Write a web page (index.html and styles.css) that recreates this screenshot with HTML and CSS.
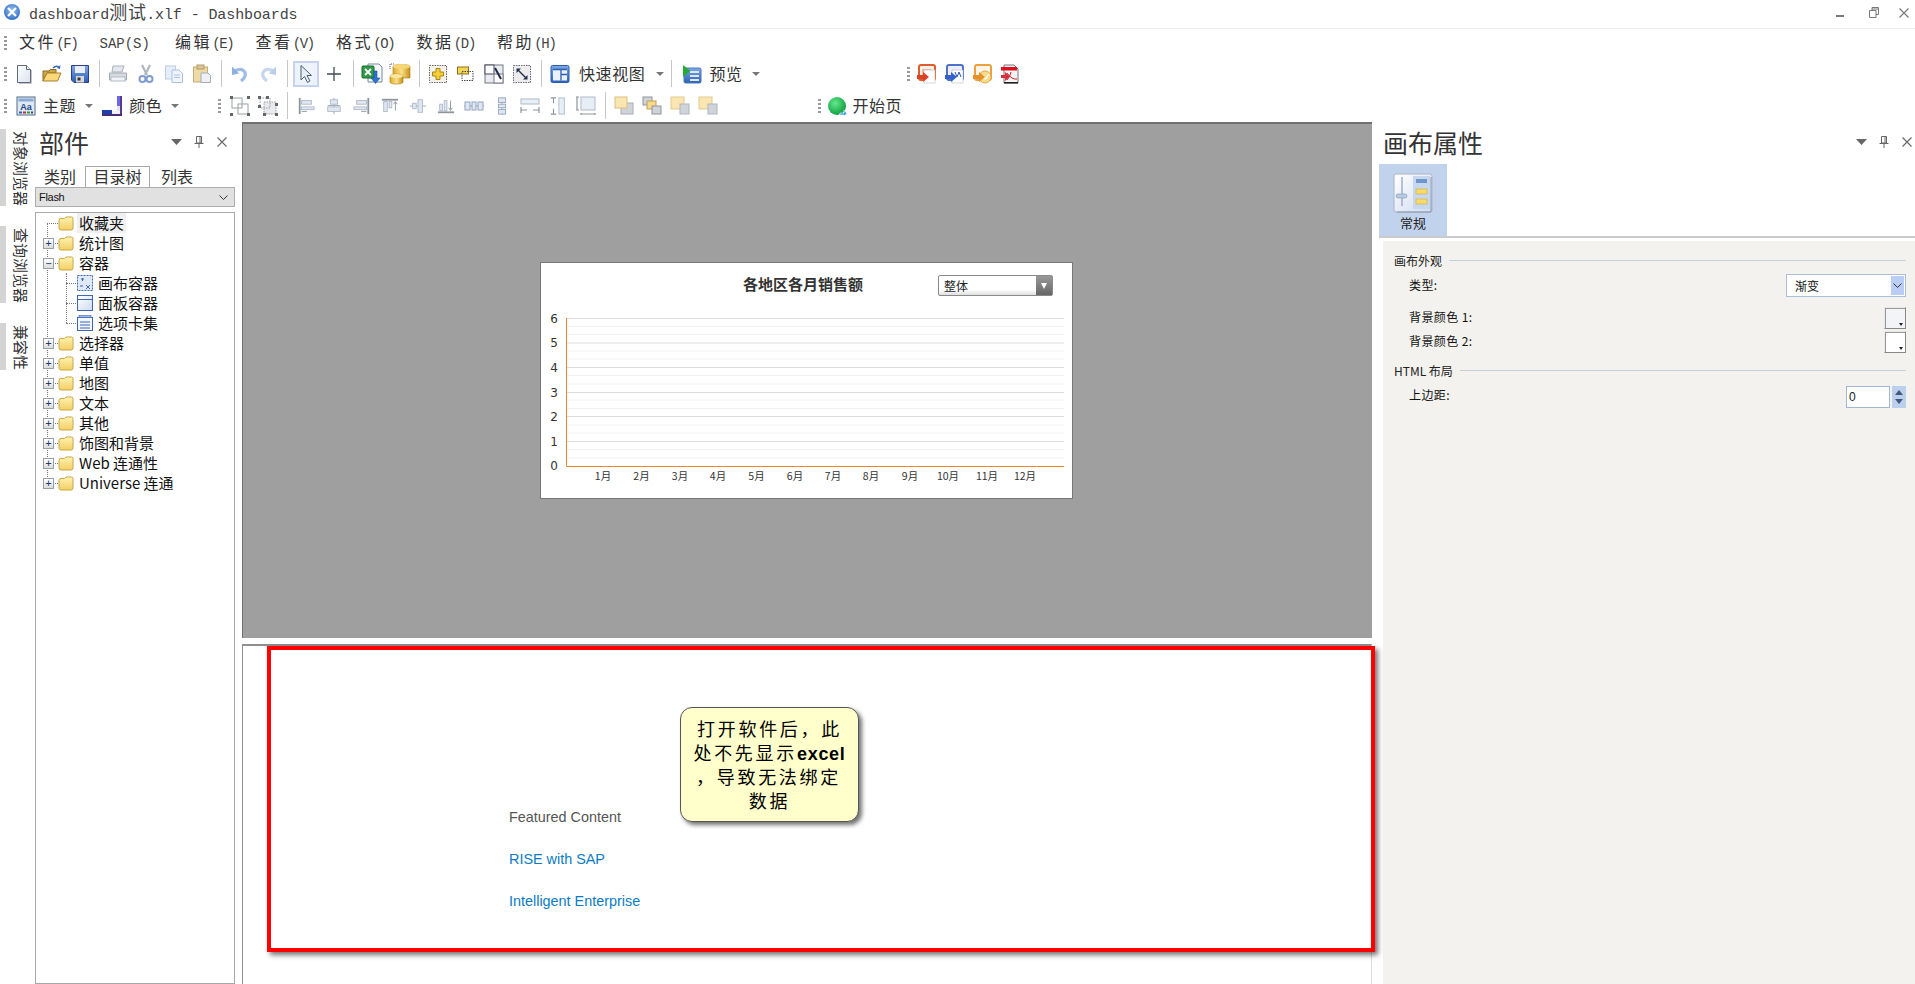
FILE: index.html
```html
<!DOCTYPE html>
<html lang="zh-CN">
<head>
<meta charset="utf-8">
<title>dashboard测试.xlf - Dashboards</title>
<link rel="stylesheet" href="styles.css">
</head>
<body>
<svg class="sprite" aria-hidden="true">
  <defs>
    <linearGradient id="gFold" x1="0" y1="0" x2="0" y2="1"><stop offset="0" stop-color="#fff3b4"/><stop offset="1" stop-color="#f3cf62"/></linearGradient>
    <linearGradient id="gDoc" x1="0" y1="0" x2="1" y2="1"><stop offset="0" stop-color="#fff"/><stop offset="1" stop-color="#d9e2ee"/></linearGradient>
    <linearGradient id="gBlue" x1="0" y1="0" x2="0" y2="1"><stop offset="0" stop-color="#7da8e6"/><stop offset="1" stop-color="#2c5fb5"/></linearGradient>
    <linearGradient id="gGold" x1="0" y1="0" x2="1" y2="0"><stop offset="0" stop-color="#e0a92a"/><stop offset=".5" stop-color="#fbe08a"/><stop offset="1" stop-color="#c98f16"/></linearGradient>
    <linearGradient id="gPanel" x1="0" y1="0" x2="1" y2="1"><stop offset="0" stop-color="#ffffff"/><stop offset="1" stop-color="#cfdcf2"/></linearGradient>
    <radialGradient id="gGreen" cx=".4" cy=".35" r=".7"><stop offset="0" stop-color="#63e88c"/><stop offset="1" stop-color="#0a9a3a"/></radialGradient>
    <radialGradient id="gApp" cx=".5" cy=".4" r=".6"><stop offset="0" stop-color="#9dc3ee"/><stop offset="1" stop-color="#2f6fc8"/></radialGradient>

    <symbol id="i-folder" viewBox="0 0 16 15"><path d="M1 4.5Q1 2.5 3 2.5H6.5L8 1H13.5Q15 1 15 2.5V12Q15 14 13 14H3Q1 14 1 12Z" fill="url(#gFold)" stroke="#c8a648"/></symbol>
    <symbol id="i-new" viewBox="0 0 20 20"><path d="M3.5 1.5H12.5L16.5 5.5V18.5H3.5Z" fill="url(#gDoc)" stroke="#5c6b80"/><path d="M12.5 1.5V5.5H16.5" fill="#eef" stroke="#5c6b80"/><path d="M17.5 6V19.5H5" fill="none" stroke="#c4c4c4"/></symbol>
    <symbol id="i-open" viewBox="0 0 20 20"><path d="M1 7H7L8.500 5.500H14V9H5L1 17Z" fill="#d2a548" stroke="#8a6a24"/><path d="M1 17L5 9H19L15.500 17Z" fill="#fbd87a" stroke="#a6812c"/><path d="M11 4Q14 1 17 3" fill="none" stroke="#3a6cc0" stroke-width="1.500"/><path d="M18.500 1L18 5L14.800 4Z" fill="#3a6cc0"/></symbol>
    <symbol id="i-save" viewBox="0 0 20 20"><path d="M1.500 1.500H18.500V18.500H4L1.500 16Z" fill="url(#gBlue)" stroke="#2c3f8c"/><rect x="5" y="2" width="10" height="7" fill="#e8eefa"/><rect x="6" y="12" width="8" height="6.500" fill="#d8d8d8"/><rect x="7.500" y="13.500" width="3" height="3" fill="#333"/></symbol>
    <symbol id="i-print" viewBox="0 0 20 20"><path d="M5 2H16L14 8H4Z" fill="#e4e8ee" stroke="#aab2bc"/><path d="M1.500 9H18.500V16H1.500Z" fill="#d5dae1" stroke="#a3abb5"/><rect x="3" y="13" width="14" height="4" fill="#f3f4f6" stroke="#b5bcc5"/></symbol>
    <symbol id="i-cut" viewBox="0 0 20 20"><path d="M6 1L11 11M14 1L9 11" stroke="#b0b7bf" stroke-width="2.200" fill="none"/><circle cx="6.500" cy="15" r="3" fill="none" stroke="#7f9bd0" stroke-width="2"/><circle cx="13.500" cy="15" r="3" fill="none" stroke="#7f9bd0" stroke-width="2"/></symbol>
    <symbol id="i-copy" viewBox="0 0 20 20"><rect x="1.500" y="2" width="10" height="13" fill="#e6eef9" stroke="#bccde6"/><path d="M8 6H15L18.500 9.500V18.500H8Z" fill="#f1f5fb" stroke="#a9c0e2"/><path d="M10 11H16M10 13.500H16" stroke="#a9c0e2"/></symbol>
    <symbol id="i-paste" viewBox="0 0 20 20"><rect x="1.500" y="3" width="14" height="15" fill="#efd9a7" stroke="#c6ad77"/><rect x="5" y="1" width="7" height="4" fill="#d9c79b" stroke="#b49c67"/><path d="M9 9H16L18.500 11.500V18.500H9Z" fill="#eef0f3" stroke="#a6adb6"/></symbol>
    <symbol id="i-undo" viewBox="0 0 20 20"><path d="M5 7Q12 3 15 8.500Q16.500 13 11 17" fill="none" stroke="#9dbde8" stroke-width="3.200"/><path d="M2 2.500L9 9.500L2 11Z" fill="#8db0e2"/></symbol>
    <symbol id="i-redo" viewBox="0 0 20 20"><path d="M15 7Q8 3 5 8.500Q3.500 13 9 17" fill="none" stroke="#c6d6ee" stroke-width="3.200"/><path d="M18 2.500L11 9.500L18 11Z" fill="#b8cdea"/></symbol>
    <symbol id="i-arrow" viewBox="0 0 20 20"><path d="M5 1.500V16L8.500 12.500L11.500 18.500L14 17L11 11.500H15.500Z" fill="#e8eef8" stroke="#4e5f73"/></symbol>
    <symbol id="i-plus" viewBox="0 0 20 20"><path d="M10 3V17M3 10H17" stroke="#3f4a5a" stroke-width="1.300" fill="none"/></symbol>
    <symbol id="i-excel" viewBox="0 0 22 22"><path d="M7 1H18L21 4V19H7Z" fill="#f4f7fb" stroke="#7a8aa0"/><rect x="1" y="3" width="12" height="12" rx="1" fill="#2f9a46" stroke="#1c6b30"/><path d="M4 6L10 12M10 6L4 12" stroke="#fff" stroke-width="1.800"/><path d="M16 8V15H19L14.500 20.500L10 15H13V8Z" fill="#2f73d0" stroke="#1c4f9c" stroke-width=".6"/></symbol>
    <symbol id="i-db" viewBox="0 0 22 22"><path d="M1 6V1H6" fill="none" stroke="#555" stroke-dasharray="1 1"/><path d="M4 3.500C4 .800 21 .800 21 3.500V15H4Z" fill="url(#gGold)" stroke="#a87d12" stroke-width=".6"/><ellipse cx="12.500" cy="3.500" rx="8.500" ry="2.500" fill="#f5d777"/><path d="M1 13C1 10.500 14 10.500 14 13V19C14 21.800 1 21.800 1 19Z" fill="url(#gGold)" stroke="#a87d12" stroke-width=".6"/><ellipse cx="7.500" cy="13" rx="6.500" ry="2" fill="#fbe6a0"/></symbol>
    <symbol id="i-addc" viewBox="0 0 20 20"><rect x="1.500" y="1.500" width="17" height="17" fill="#f4f2e8" stroke="#667" stroke-dasharray="1.500 1"/><path d="M8 4.500H12V8H15.500V12H12V15.500H8V12H4.500V8H8Z" fill="#f5cf3a" stroke="#a88815"/></symbol>
    <symbol id="i-smallc" viewBox="0 0 20 20"><rect x="1.500" y="3" width="11" height="7" fill="#f6d452" stroke="#8a7318"/><rect x="6" y="7.500" width="11" height="9" fill="none" stroke="#445" stroke-dasharray="1.500 1"/></symbol>
    <symbol id="i-fit" viewBox="0 0 20 20"><rect x="1" y="1" width="18" height="18" fill="#e8ebf0" stroke="#778"/><rect x="1" y="1" width="9" height="9" fill="#fff" stroke="#445"/><rect x="10" y="10" width="9" height="9" fill="#fff" stroke="#778"/><path d="M11 4L17 15" stroke="#1d2b44" stroke-width="2"/></symbol>
    <symbol id="i-resize" viewBox="0 0 20 20"><rect x="1.500" y="1.500" width="17" height="17" fill="#ececec" stroke="#667" stroke-dasharray="1.500 1"/><path d="M6 6L14 14" stroke="#22304a" stroke-width="1.500"/><path d="M4.500 4.500H9L4.500 9ZM15.500 15.500H11L15.500 11Z" fill="#22304a"/></symbol>
    <symbol id="i-quick" viewBox="0 0 20 20"><rect x="1" y="1.500" width="18" height="17" rx="1.500" fill="url(#gBlue)" stroke="#2a5fb0"/><rect x="3" y="5.500" width="14" height="11" fill="#eaf1fb"/><path d="M11 5.500V16.500M11 10.500H17M3 5.500H17" stroke="#2a5fb0" stroke-width="1.300"/></symbol>
    <symbol id="i-preview" viewBox="0 0 20 20"><rect x="2" y="4" width="17" height="15" rx="1.500" fill="url(#gBlue)" stroke="#4c78b8"/><rect x="8" y="7" width="9" height="2" fill="#dce8f8"/><rect x="8" y="11" width="9" height="2" fill="#dce8f8"/><rect x="8" y="15" width="9" height="2" fill="#dce8f8"/><path d="M1 1L8.500 7L1 13Z" fill="#28a83c"/></symbol>
    <symbol id="i-ppt" viewBox="0 0 20 20"><rect x="3" y="1" width="16" height="15" rx="2" fill="#f3f1ec" stroke="#e25c2a" stroke-width="2"/><rect x="6" y="5" width="9" height="7" fill="#f7b79c"/><rect x="8" y="6" width="11" height="13" fill="#fff" stroke="#bbb" stroke-width=".6"/><path d="M1 11H7V8L13 13L7 18V15H1Z" fill="#d8432a"/></symbol>
    <symbol id="i-word" viewBox="0 0 20 20"><rect x="3" y="1" width="16" height="15" rx="2" fill="#eef" stroke="#4d73c8" stroke-width="2"/><rect x="8" y="6" width="11" height="13" fill="#fff" stroke="#bbb" stroke-width=".6"/><path d="M11 8L13 13L15 8L17 13" fill="none" stroke="#2c53a8"/><path d="M1 11H7V8L13 13L7 18V15H1Z" fill="#3561c8"/></symbol>
    <symbol id="i-outl" viewBox="0 0 20 20"><rect x="3" y="1" width="16" height="15" rx="2" fill="#fdf5e8" stroke="#eca042" stroke-width="2"/><circle cx="13" cy="13" r="6" fill="#f8dc8c" stroke="#e2a94a"/><path d="M11 13L13.500 15L17 10" fill="none" stroke="#fff" stroke-width="1.300"/><path d="M1 11H7V8L13 13L7 18V15H1Z" fill="#e59028"/></symbol>
    <symbol id="i-pdf" viewBox="0 0 20 20"><path d="M4 1H14L18 5V19H4Z" fill="#f4f4f4" stroke="#777"/><rect x="1" y="3" width="16" height="3.500" fill="#e01020"/><path d="M7 9Q12 16 17 15M7 16Q10 13 11 8" fill="none" stroke="#c8202c"/><path d="M1 11H5V8L10 12.500L5 17V14H1Z" fill="#d8303a"/><rect x="4" y="18" width="14" height="1.500" fill="#222"/></symbol>
    <symbol id="i-theme" viewBox="0 0 20 20"><rect x="1" y="1" width="18" height="18" fill="#dfe8f5" stroke="#536a8a"/><rect x="2.500" y="2.500" width="15" height="3" fill="#8daad4"/><text x="10" y="13.500" class="aa">Aa</text><rect x="3" y="15.500" width="3" height="2" fill="#2a62b8"/><rect x="7" y="15.500" width="3" height="2" fill="#c03030"/><rect x="11" y="15.500" width="3" height="2" fill="#2f9a46"/><rect x="15" y="15.500" width="2" height="2" fill="#444"/></symbol>
    <symbol id="i-color" viewBox="0 0 20 20"><rect x="15" y="0" width="5" height="10" fill="#6a6ae8"/><rect x="15" y="10" width="5" height="6" fill="#e2e2f2"/><rect x="18" y="0" width="2" height="20" fill="#5b3a8e"/><rect x="0" y="14" width="10" height="5" fill="#1c3fa8"/><rect x="0" y="18" width="20" height="2" fill="#4a2a7a"/><rect x="10" y="15" width="8" height="3" fill="#f2f2f2"/></symbol>
    <symbol id="i-group" viewBox="0 0 20 20"><g fill="none" stroke="#9aa0a6"><rect x="2" y="2" width="10" height="10"/><rect x="8" y="8" width="10" height="10"/></g><g fill="#666"><rect x="0" y="0" width="3" height="3"/><rect x="17" y="0" width="3" height="3"/><rect x="0" y="17" width="3" height="3"/><rect x="17" y="17" width="3" height="3"/></g></symbol>
    <symbol id="i-ungroup" viewBox="0 0 20 20"><rect x="6" y="6" width="12" height="12" fill="#e8eaee" stroke="#9aa0a6" stroke-dasharray="1.500 1"/><path d="M2 2H12V12H2Z" fill="none" stroke="#9aa0a6" stroke-dasharray="1.500 1"/><g fill="#666"><rect x="0" y="0" width="3" height="3"/><rect x="8" y="0" width="3" height="3"/><rect x="17" y="7" width="3" height="3"/><rect x="0" y="9" width="3" height="3"/><rect x="17" y="17" width="3" height="3"/><rect x="5" y="17" width="3" height="3"/></g></symbol>

    <symbol id="a-left" viewBox="0 0 20 20"><path d="M3 1V19" stroke="#8d949c" stroke-width="2"/><rect x="5" y="4" width="11" height="4" fill="#dfe7f2" stroke="#aeb9c7"/><rect x="5" y="11" width="14" height="3" fill="#dfe7f2" stroke="#aeb9c7"/><path d="M5 16H11" stroke="#8d949c"/></symbol>
    <symbol id="a-center" viewBox="0 0 20 20"><path d="M10 1V4M10 8V11M10 15V19M3 9.500H17" stroke="#9aa3ad"/><rect x="6" y="3" width="8" height="5" fill="#dfe7f2" stroke="#aeb9c7"/><rect x="3" y="11" width="14" height="5" fill="#dfe7f2" stroke="#aeb9c7"/></symbol>
    <symbol id="a-right" viewBox="0 0 20 20"><path d="M17 1V19" stroke="#8d949c" stroke-width="2"/><rect x="4" y="4" width="11" height="4" fill="#dfe7f2" stroke="#aeb9c7"/><rect x="1" y="11" width="14" height="3" fill="#dfe7f2" stroke="#aeb9c7"/><path d="M9 16H15" stroke="#8d949c"/></symbol>
    <symbol id="a-top" viewBox="0 0 20 20"><path d="M1 3H19" stroke="#8d949c" stroke-width="2"/><rect x="3" y="5" width="4" height="11" fill="#dfe7f2" stroke="#aeb9c7"/><rect x="9" y="5" width="3" height="7" fill="#dfe7f2" stroke="#aeb9c7"/><path d="M16 15V6M14 8L16 5L18 8" fill="none" stroke="#8d949c"/></symbol>
    <symbol id="a-mid" viewBox="0 0 20 20"><path d="M1 10H19" stroke="#9aa3ad"/><rect x="4" y="7" width="4" height="6" fill="#dfe7f2" stroke="#aeb9c7"/><rect x="10" y="3" width="5" height="14" fill="#dfe7f2" stroke="#aeb9c7"/></symbol>
    <symbol id="a-bottom" viewBox="0 0 20 20"><path d="M1 17H19" stroke="#8d949c" stroke-width="2"/><rect x="3" y="8" width="3" height="7" fill="#dfe7f2" stroke="#aeb9c7"/><rect x="8" y="4" width="3" height="11" fill="#dfe7f2" stroke="#aeb9c7"/><path d="M15 4V14M13 12L15 15L17 12" fill="none" stroke="#8d949c"/></symbol>
    <symbol id="a-hdist" viewBox="0 0 20 20"><path d="M0 10H20" stroke="#9aa3ad"/><rect x="1" y="6" width="5" height="8" fill="#dfe7f2" stroke="#93a5bd"/><rect x="8" y="6" width="4" height="8" fill="#dfe7f2" stroke="#93a5bd"/><rect x="14" y="6" width="5" height="8" fill="#dfe7f2" stroke="#93a5bd"/></symbol>
    <symbol id="a-vdist" viewBox="0 0 20 20"><path d="M10 0V20" stroke="#9aa3ad"/><rect x="6" y="1" width="8" height="5" fill="#dfe7f2" stroke="#93a5bd"/><rect x="6" y="8" width="8" height="4" fill="#dfe7f2" stroke="#93a5bd"/><rect x="6" y="14" width="8" height="5" fill="#dfe7f2" stroke="#93a5bd"/></symbol>
    <symbol id="a-hsize" viewBox="0 0 20 20"><rect x="1" y="3" width="18" height="5" fill="#e8eef6" stroke="#aeb9c7"/><path d="M1 11V17M19 11V17M1 14H7M13 14H19" stroke="#8d949c" stroke-width="1.200"/></symbol>
    <symbol id="a-vsize" viewBox="0 0 20 20"><rect x="11" y="1" width="6" height="18" fill="#e8eef6" stroke="#aeb9c7"/><path d="M2 1H8M2 19H8M5 1V7M5 13V19" stroke="#8d949c" stroke-width="1.200"/></symbol>
    <symbol id="a-bsize" viewBox="0 0 20 20"><rect x="5" y="1" width="14" height="13" fill="#e8eef6" stroke="#aeb9c7"/><path d="M1 1V14M0 1H3M0 14H3M5 17V19M19 17V19M5 18H19" stroke="#8d949c" stroke-width="1.200"/></symbol>

    <symbol id="o-a" viewBox="0 0 20 20"><rect x="7" y="7" width="12" height="11" fill="#d0d4da" stroke="#a8adb4"/><rect x="1" y="1" width="12" height="11" fill="#fbe6b2" stroke="#d9bf80"/></symbol>
    <symbol id="o-b" viewBox="0 0 20 20"><rect x="1" y="1" width="9" height="8" fill="#d0d4da" stroke="#8e949c"/><rect x="5" y="5" width="9" height="8" fill="#f8d98e" stroke="#c0a050"/><rect x="10" y="10" width="9" height="8" fill="#d0d4da" stroke="#8e949c"/></symbol>
    <symbol id="o-c" viewBox="0 0 20 20"><rect x="1" y="1" width="13" height="12" fill="#fbe6b2" stroke="#e0cb92"/><rect x="10" y="8" width="9" height="10" fill="#d0d4da" stroke="#b0b5bc"/></symbol>
    <symbol id="i-start" viewBox="0 0 20 20"><circle cx="10" cy="10" r="9" fill="url(#gGreen)"/><path d="M13 17H17V14L20 17.500L17 20V19H12Z" fill="#3aa3e8" stroke="#fff" stroke-width=".6"/></symbol>
    <symbol id="i-general" viewBox="0 0 40 40"><rect x="1" y="1" width="38" height="38" rx="2" fill="url(#gPanel)" stroke="#aab4c4"/><rect x="20" y="3" width="17" height="33" fill="#c7d8ee"/><path d="M9 4V33" stroke="#7f8c9e"/><rect x="3" y="21" width="11" height="4" rx="2" fill="#b8cbe4" stroke="#7f93ad" stroke-width=".6"/><rect x="23" y="6" width="11" height="4" fill="#6f96cc"/><rect x="23" y="16" width="11" height="5" fill="#f7dc6c" stroke="#d0a93a" stroke-width=".6"/><rect x="23" y="26" width="11" height="5" fill="#f7dc6c" stroke="#d0a93a" stroke-width=".6"/><path d="M38 4V39H4" fill="none" stroke="#8d97a6"/></symbol>
    <symbol id="i-canvas-c" viewBox="0 0 16 16"><rect x=".5" y=".5" width="15" height="15" fill="#dfe9f8" stroke="#3c67b4" stroke-dasharray="2 1"/><path d="M4 4H7M5.500 3V6M9 10L13 14M13 10L9 14M3 11H6" stroke="#3c67b4"/></symbol>
    <symbol id="i-panel-c" viewBox="0 0 16 16"><rect x=".5" y=".5" width="15" height="15" fill="url(#gPanel)" stroke="#3c67b4"/><path d="M1 4.500H15" stroke="#3c67b4"/></symbol>
    <symbol id="i-tab-c" viewBox="0 0 16 16"><rect x=".5" y="2.500" width="15" height="13" fill="#f2f6fc" stroke="#3c67b4"/><rect x="2" y=".5" width="12" height="2" fill="#9db9e4" stroke="#3c67b4" stroke-width=".6"/><path d="M3 7H13M3 10H13M3 13H13" stroke="#3c67b4"/></symbol>
    <symbol id="i-tri" viewBox="0 0 11 6"><path d="M0 0H11L5.500 6Z" fill="#666"/></symbol>
    <symbol id="i-pin" viewBox="0 0 10 12"><path d="M2.500 .5H7.500V7H2.500ZM.5 7.500H9.500M5 8V12M6 1V7" fill="none" stroke="#666"/></symbol>
    <symbol id="i-x" viewBox="0 0 10 10"><path d="M.5 .5L9.500 9.500M9.500 .5L.5 9.500" stroke="#666" stroke-width="1.100"/></symbol>
    <symbol id="i-chev" viewBox="0 0 9 5"><path d="M.5 .5L4.500 4.500L8.500 .5" fill="none" stroke="#333"/></symbol>
  </defs>
</svg>

<div class="app">
  <header class="titlebar">
    <svg class="appicon" viewBox="0 0 16 16"><circle cx="8" cy="8" r="8" fill="url(#gApp)"/><path d="M4 4L12 12M12 4L4 12" stroke="#fff" stroke-width="2.200"/></svg>
    <span class="titletext">dashboard<span class="tcjk">测试</span>.xlf - Dashboards</span>
    <div class="winctl">
      <svg class="w-min" viewBox="0 0 8 2"><rect width="8" height="2" fill="#777"/></svg>
      <svg class="w-res" viewBox="0 0 10 11"><path d="M.5 3.500H7V10.500H.5ZM3 3.500V.5H9.500V7.500H7M3 2H9.500" fill="none" stroke="#777"/></svg>
      <svg class="w-x" viewBox="0 0 10 10"><path d="M.5 .5L9.500 9.500M9.500 .5L.5 9.500" stroke="#777" stroke-width="1.100"/></svg>
    </div>
  </header>

  <nav class="menubar">
    <span class="grip gmenu"></span>
    <span class="mi">文件<i>(F)</i></span>
    <span class="mi mi-wide"><i>SAP(S)</i></span>
    <span class="mi">编辑<i>(E)</i></span>
    <span class="mi">查看<i>(V)</i></span>
    <span class="mi">格式<i>(O)</i></span>
    <span class="mi">数据<i>(D)</i></span>
    <span class="mi">帮助<i>(H)</i></span>
  </nav>

  <div class="toolbar tb1">
    <span class="grip"></span>
    <span class="s"><svg class="ic"><use href="#i-new"/></svg></span>
    <span class="s"><svg class="ic"><use href="#i-open"/></svg></span>
    <span class="s"><svg class="ic"><use href="#i-save"/></svg></span>
    <span class="sep"></span>
    <span class="s"><svg class="ic"><use href="#i-print"/></svg></span>
    <span class="s"><svg class="ic"><use href="#i-cut"/></svg></span>
    <span class="s"><svg class="ic"><use href="#i-copy"/></svg></span>
    <span class="s"><svg class="ic"><use href="#i-paste"/></svg></span>
    <span class="sep"></span>
    <span class="s"><svg class="ic"><use href="#i-undo"/></svg></span>
    <span class="s"><svg class="ic"><use href="#i-redo"/></svg></span>
    <span class="sep"></span>
    <span class="s"><span class="on"><svg class="ic"><use href="#i-arrow"/></svg></span></span>
    <span class="s"><svg class="ic"><use href="#i-plus"/></svg></span>
    <span class="sep"></span>
    <span class="s"><svg class="ic ic22"><use href="#i-excel"/></svg></span>
    <span class="s"><svg class="ic ic22"><use href="#i-db"/></svg></span>
    <span class="sep"></span>
    <span class="s"><svg class="ic"><use href="#i-addc"/></svg></span>
    <span class="s"><svg class="ic"><use href="#i-smallc"/></svg></span>
    <span class="s"><svg class="ic"><use href="#i-fit"/></svg></span>
    <span class="s"><svg class="ic"><use href="#i-resize"/></svg></span>
    <span class="sep"></span>
    <span class="s"><svg class="ic"><use href="#i-quick"/></svg></span>
    <span class="tbt ml5">快速视图</span>
    <span class="caret ml11"></span>
    <span class="sep ml7"></span>
    <span class="s ml2"><svg class="ic"><use href="#i-preview"/></svg></span>
    <span class="tbt ml3">预览</span>
    <span class="caret ml9"></span>
    <span class="grip ml147 mr2"></span>
    <span class="s"><svg class="ic"><use href="#i-ppt"/></svg></span>
    <span class="s"><svg class="ic"><use href="#i-word"/></svg></span>
    <span class="s"><svg class="ic"><use href="#i-outl"/></svg></span>
    <span class="s"><svg class="ic"><use href="#i-pdf"/></svg></span>
  </div>

  <div class="toolbar tb2">
    <span class="grip"></span>
    <span class="s ml2"><svg class="ic"><use href="#i-theme"/></svg></span>
    <span class="tbt ml3">主题</span>
    <span class="caret ml9"></span>
    <span class="s ml5"><svg class="ic"><use href="#i-color"/></svg></span>
    <span class="tbt ml3">颜色</span>
    <span class="caret ml9"></span>
    <span class="grip ml39 mr5"></span>
    <span class="s"><svg class="ic"><use href="#i-group"/></svg></span>
    <span class="s"><svg class="ic"><use href="#i-ungroup"/></svg></span>
    <span class="sep"></span>
    <span class="s"><svg class="ic ic18"><use href="#a-left"/></svg></span>
    <span class="s"><svg class="ic ic18"><use href="#a-center"/></svg></span>
    <span class="s"><svg class="ic ic18"><use href="#a-right"/></svg></span>
    <span class="s"><svg class="ic ic18"><use href="#a-top"/></svg></span>
    <span class="s"><svg class="ic ic18"><use href="#a-mid"/></svg></span>
    <span class="s"><svg class="ic ic18"><use href="#a-bottom"/></svg></span>
    <span class="s"><svg class="ic"><use href="#a-hdist"/></svg></span>
    <span class="s"><svg class="ic ic18"><use href="#a-vdist"/></svg></span>
    <span class="s"><svg class="ic"><use href="#a-hsize"/></svg></span>
    <span class="s"><svg class="ic ic18"><use href="#a-vsize"/></svg></span>
    <span class="s"><svg class="ic"><use href="#a-bsize"/></svg></span>
    <span class="sep"></span>
    <span class="s"><svg class="ic"><use href="#o-a"/></svg></span>
    <span class="s"><svg class="ic"><use href="#o-b"/></svg></span>
    <span class="s"><svg class="ic"><use href="#o-c"/></svg></span>
    <span class="s"><svg class="ic"><use href="#o-c"/></svg></span>
    <span class="grip ml96 mr2"></span>
    <span class="s"><svg class="ic"><use href="#i-start"/></svg></span>
    <span class="tbt ml1">开始页</span>
  </div>

  <main class="main">
    <aside class="vtabs">
      <div class="vtab"><span>对象浏览器</span></div>
      <div class="vtab"><span>查询浏览器</span></div>
      <div class="vtab vtab-short"><span>兼容性</span></div>
    </aside>

    <section class="parts">
      <div class="phead">
        <h2>部件</h2>
        <div class="pctl">
          <svg class="c-tri"><use href="#i-tri"/></svg>
          <svg class="c-pin"><use href="#i-pin"/></svg>
          <svg class="c-x"><use href="#i-x"/></svg>
        </div>
      </div>
      <div class="ptabs">
        <span class="ptab">类别</span>
        <span class="ptab active">目录树</span>
        <span class="ptab last">列表</span>
      </div>
      <div class="flashsel"><span>Flash</span><svg class="chev"><use href="#i-chev"/></svg></div>
      <ul class="tree">
        <li class="row leaf"><span class="exp"></span><svg class="fld"><use href="#i-folder"/></svg><span class="lbl hl">收藏夹</span></li>
        <li class="row"><span class="exp">+</span><svg class="fld"><use href="#i-folder"/></svg><span class="lbl">统计图</span></li>
        <li class="row"><span class="exp">−</span><svg class="fld"><use href="#i-folder"/></svg><span class="lbl">容器</span></li>
        <li class="kids">
          <ul>
            <li class="row child"><svg class="fld"><use href="#i-canvas-c"/></svg><span class="lbl">画布容器</span></li>
            <li class="row child"><svg class="fld"><use href="#i-panel-c"/></svg><span class="lbl">面板容器</span></li>
            <li class="row child"><svg class="fld"><use href="#i-tab-c"/></svg><span class="lbl">选项卡集</span></li>
          </ul>
        </li>
        <li class="row"><span class="exp">+</span><svg class="fld"><use href="#i-folder"/></svg><span class="lbl">选择器</span></li>
        <li class="row"><span class="exp">+</span><svg class="fld"><use href="#i-folder"/></svg><span class="lbl">单值</span></li>
        <li class="row"><span class="exp">+</span><svg class="fld"><use href="#i-folder"/></svg><span class="lbl">地图</span></li>
        <li class="row"><span class="exp">+</span><svg class="fld"><use href="#i-folder"/></svg><span class="lbl">文本</span></li>
        <li class="row"><span class="exp">+</span><svg class="fld"><use href="#i-folder"/></svg><span class="lbl">其他</span></li>
        <li class="row"><span class="exp">+</span><svg class="fld"><use href="#i-folder"/></svg><span class="lbl">饰图和背景</span></li>
        <li class="row"><span class="exp">+</span><svg class="fld"><use href="#i-folder"/></svg><span class="lbl">Web 连通性</span></li>
        <li class="row"><span class="exp">+</span><svg class="fld"><use href="#i-folder"/></svg><span class="lbl">Universe 连通</span></li>
      </ul>
    </section>

    <section class="center">
      <div class="canvas">
        <div class="chart">
          <svg class="chartsvg" viewBox="0 0 531 235">
            <defs>
              <linearGradient id="gBtn" x1="0" y1="0" x2="0" y2="1"><stop offset="0" stop-color="#999"/><stop offset="1" stop-color="#666"/></linearGradient>
              <linearGradient id="gSel" x1="0" y1="0" x2="0" y2="1"><stop offset="0" stop-color="#fff"/><stop offset=".7" stop-color="#fff"/><stop offset="1" stop-color="#ddd"/></linearGradient>
            </defs>
            <text x="262" y="27" class="ct">各地区各月销售额</text>
            <rect x="397.500" y="12.500" width="114" height="20" rx="1.500" fill="url(#gSel)" stroke="#8a8a8a"/>
            <rect x="495" y="13" width="16" height="19" fill="url(#gBtn)"/>
            <path d="M500 20H506L503 26Z" fill="#fff"/>
            <text x="403" y="28" class="cs">整体</text>
            <g transform="translate(0 1)">
              <g class="minor">
                <path d="M25 62.500H523M25 70.500H523M25 87H523M25 95H523M25 111.500H523M25 120H523M25 136H523M25 144.500H523M25 161H523M25 169H523M25 185.500H523M25 194H523"/>
              </g>
              <g class="major">
                <path d="M25 54.500H523M25 79H523M25 103.500H523M25 128.500H523M25 152.500H523M25 177.500H523"/>
              </g>
              <path class="axis" d="M25.500 54V202.500H523"/>
              <g class="yl">
                <text x="17" y="59">6</text><text x="17" y="83">5</text><text x="17" y="108">4</text><text x="17" y="133">3</text><text x="17" y="157">2</text><text x="17" y="182">1</text><text x="17" y="206">0</text>
              </g>
              <g class="xl">
                <text x="62" y="216">1月</text><text x="100.500" y="216">2月</text><text x="139" y="216">3月</text><text x="177" y="216">4月</text><text x="215.500" y="216">5月</text><text x="254" y="216">6月</text><text x="292" y="216">7月</text><text x="330" y="216">8月</text><text x="369" y="216">9月</text><text x="407" y="216">10月</text><text x="446" y="216">11月</text><text x="484" y="216">12月</text>
              </g>
            </g>
          </svg>
        </div>
      </div>
      <div class="split"></div>
      <div class="lower">
        <p class="fc">Featured Content</p>
        <p class="lnk">RISE with SAP</p>
        <p class="lnk">Intelligent Enterprise</p>
      </div>
      <div class="redbox"></div>
      <div class="callout">打开软件后，此<br>处不先显示<b>excel</b><br><span class="cl3">，导致无法绑定</span><br>数据</div>
    </section>

    <section class="props">
      <div class="phead phead-r">
        <h2>画布属性</h2>
        <div class="pctl">
          <svg class="c-tri"><use href="#i-tri"/></svg>
          <svg class="c-pin"><use href="#i-pin"/></svg>
          <svg class="c-x"><use href="#i-x"/></svg>
        </div>
      </div>
      <div class="rtabs">
        <div class="rtab"><svg class="rtab-ic"><use href="#i-general"/></svg><span>常规</span></div>
      </div>
      <div class="pbody">
        <div class="ghead"><span>画布外观</span><i></i></div>
        <div class="prow r-type"><span class="plbl">类型:</span><div class="psel"><span>渐变</span><b><svg class="chev2"><use href="#i-chev"/></svg></b></div></div>
        <div class="prow r-c1"><span class="plbl">背景颜色 1:</span><div class="swatch sw1"></div></div>
        <div class="prow r-c2"><span class="plbl">背景颜色 2:</span><div class="swatch"></div></div>
        <div class="ghead g2"><span>HTML 布局</span><i></i></div>
        <div class="prow r-m"><span class="plbl">上边距:</span><div class="spin"><div class="inp">0</div><div class="sbtn"><em class="up"></em><em class="dn"></em></div></div></div>
      </div>
    </section>
  </main>
</div>
</body>
</html>
```

FILE: styles.css
```css
* { box-sizing: border-box; }
html, body { margin: 0; padding: 0; height: 100%; overflow: hidden; background: #fff; }
body { font-family: "Noto Sans CJK SC", "Liberation Sans", sans-serif; color: #222; }
ul { list-style: none; margin: 0; padding: 0; }
.sprite { position: absolute; width: 0; height: 0; }
.aa { font: bold 9px "Liberation Sans", sans-serif; fill: #234a86; text-anchor: middle; }

.app { display: flex; flex-direction: column; height: 984px; width: 1915px; }

.titlebar { height: 29px; flex: none; display: flex; align-items: center; padding-left: 4px; border-bottom: 1px solid #ebebeb; }
.appicon { width: 16px; height: 16px; margin-top: -4px; }
.titletext { margin-left: 9px; font: 15px/20px "Liberation Mono", monospace; letter-spacing: -.1px; color: #444; margin-top: -2px; }
.tcjk { font: 18px/20px "Noto Sans CJK SC", sans-serif; letter-spacing: 1px; margin-right: -1px; }
.winctl { margin-left: auto; display: flex; align-items: flex-start; padding-right: 6px; height: 20px; margin-top: 2px; }
.w-min { width: 8px; height: 2px; margin-top: 10px; }
.w-res { width: 10px; height: 11px; margin-left: 25px; margin-top: 2px; }
.w-x { width: 10px; height: 10px; margin-left: 20px; margin-top: 3px; }

.grip { display: block; flex: none; width: 3px; height: 14px; margin-left: 4px; margin-right: 3px; background: repeating-linear-gradient(#999 0 2px, transparent 2px 4px); }
.menubar { height: 27px; flex: none; display: flex; align-items: center; font-size: 16px; color: #333; letter-spacing: 2.6px; }
.gmenu { margin-right: 12px; }
.mi { margin-right: 22px; line-height: 24px; white-space: nowrap; display: block; }
.mi i { font: normal 14px/24px "Liberation Mono", monospace; letter-spacing: -1.300px; color: #444; }
.mi-wide { margin-right: 25px; }
.mi-wide i { letter-spacing: 0; }

.toolbar { flex: none; display: flex; align-items: center; }
.tb1 { height: 35px; }
.tb2 { height: 31px; padding-bottom: 2px; }
.s { flex: none; width: 28px; height: 26px; display: flex; align-items: center; justify-content: center; }
.ic { width: 20px; height: 20px; display: block; }
.ic22 { width: 22px; height: 22px; }
.ic18 { width: 18px; height: 18px; }
.on { display: flex; align-items: center; justify-content: center; width: 26px; height: 26px; background: #eef3fb; border: 2px solid #c4d3ee; }
.sep { flex: none; width: 1px; height: 27px; background: #c8c8c8; margin: 0 4px 0 5px; }
.tbt { font-size: 16px; line-height: 22px; margin-top: -2px; letter-spacing: .6px; color: #333; white-space: nowrap; }
.caret { flex: none; width: 0; height: 0; border-left: 4px solid transparent; border-right: 4px solid transparent; border-top: 4px solid #777; }
.ml1 { margin-left: 1px; } .ml2 { margin-left: 2px; } .ml3 { margin-left: 3px; } .ml5 { margin-left: 5px; } .ml7 { margin-left: 7px; } .ml9 { margin-left: 9px; } .ml11 { margin-left: 11px; }
.ml39 { margin-left: 39px; } .ml96 { margin-left: 96px; } .ml147 { margin-left: 147px; } .mr2 { margin-right: 2px; } .mr5 { margin-right: 5px; }

.main { flex: 1; display: flex; min-height: 0; }

.vtabs { flex: none; width: 30px; padding-top: 7px; display: flex; flex-direction: column; gap: 20px; }
.vtab { height: 77px; display: flex; border-left: 6px solid #d4d4d4; padding-left: 8px; padding-top: 2px; }
.vtab-short { height: 47px; }
.vtab span { writing-mode: vertical-rl; text-orientation: sideways; font-size: 15px; line-height: 15px; color: #333; white-space: nowrap; }

.parts { flex: none; width: 206px; display: flex; flex-direction: column; padding-left: 5px; padding-right: 1px; }
.phead { height: 42px; flex: none; display: flex; align-items: center; padding-left: 4px; padding-right: 8px; padding-bottom: 2px; }
.phead h2 { margin: 0; font-size: 25px; font-weight: 400; color: #333; line-height: 32px; }
.pctl { margin-left: auto; display: flex; align-items: center; }
.c-tri { width: 11px; height: 6px; }
.c-pin { width: 10px; height: 12px; margin-left: 12px; }
.c-x { width: 10px; height: 10px; margin-left: 13px; }
.ptabs { height: 23px; flex: none; display: flex; align-items: flex-end; font-size: 16px; color: #333; }
.ptab { height: 21px; line-height: 21px; padding: 0 9px; }
.ptab.active { padding: 0 7.500px; border: 1px solid #aaa; border-bottom: 0; line-height: 19px; }
.ptab.last { margin-left: 2px; }
.flashsel { height: 20px; flex: none; display: flex; align-items: center; justify-content: space-between; background: #e1e1e1; border: 1px solid #adadad; padding: 0 6px 0 3px; font: 11px "Liberation Sans", sans-serif; color: #111; letter-spacing: -.3px; }
.chev { width: 9px; height: 5px; }
.tree { position: relative; flex: 1; margin-top: 5px; border: 1px solid #a8a8a8; font-size: 15px; color: #111; }
.tree::before { content: ""; position: absolute; left: 11px; top: 10px; height: 260px; border-left: 1px dotted #777; }
.row { position: relative; height: 20px; display: flex; align-items: center; padding-left: 7px; white-space: nowrap; }
.row::before { content: ""; position: absolute; left: 11px; top: 10px; width: 11px; border-top: 1px dotted #777; }
.exp { position: relative; flex: none; width: 11px; height: 11px; display: flex; align-items: center; justify-content: center; background: linear-gradient(#fff, #dcdcdc); border: 1px solid #9aa0a8; font: 10px/9px "DejaVu Sans Mono", monospace; color: #24386c; letter-spacing: 0; }
.leaf .exp { visibility: hidden; }
.fld { position: relative; flex: none; width: 16px; height: 15px; margin-left: 4px; }
.lbl { margin-left: 5px; line-height: 20px; }
.lbl.hl { background: #f0f0f0; margin-left: 3px; padding: 0 2px; }
.kids { position: relative; }
.kids::before { content: ""; position: absolute; left: 30px; top: 0; height: 50px; border-left: 1px dotted #777; }
.row.child { padding-left: 41px; }
.row.child::before { left: 30px; width: 10px; }
.row.child .fld { height: 16px; margin-left: 0; }

.center { position: relative; flex: none; width: 1130px; margin-left: 6px; display: flex; flex-direction: column; }
.canvas { height: 516px; flex: none; background: #9f9f9f; border-top: 2px solid #707070; border-left: 1px solid #707070; display: flex; align-items: center; justify-content: center; padding: 0 2px 1px 0; }
.chart { width: 533px; height: 237px; flex: none; background: #fff; border: 1px solid #777; }
.chartsvg { display: block; width: 531px; height: 235px; }
.ct { font-size: 15px; font-weight: 700; fill: #333; text-anchor: middle; }
.cs { font-size: 12px; fill: #222; }
.minor path { stroke: #f2f2f2; fill: none; }
.major path { stroke: #dcdcdc; fill: none; }
.axis { stroke: #e8862e; fill: none; }
.yl text { font: 12px "DejaVu Sans", sans-serif; fill: #333; text-anchor: end; }
.xl text { font-size: 10.500px; fill: #333; text-anchor: middle; }
.split { height: 6px; flex: none; }
.lower { flex: 1; background: #fff; border-top: 2px solid #8f8f8f; border-left: 1px solid #8f8f8f; border-right: 1px solid #ddd; padding: 150px 0 0 266px; font: 14.400px/42px "Liberation Sans", sans-serif; }
.lower p { margin: 0; }
.fc { color: #555; }
.lnk { color: #0a7cc4; }
.redbox { position: absolute; left: 25px; top: 524px; width: 1108px; height: 306px; border: 4px solid #f00; box-shadow: 3px 3px 5px rgba(0, 0, 0, .55); }
.callout { position: absolute; left: 438px; top: 585px; width: 179px; height: 115px; padding-top: 8px; background: #ffffcc; border: 1px solid #555; border-radius: 12px; box-shadow: 3px 3px 4px rgba(0, 0, 0, .55); font-size: 18px; line-height: 24px; letter-spacing: 2.700px; color: #000; text-align: center; white-space: nowrap; }
.callout b { font-family: "Liberation Sans", sans-serif; letter-spacing: .7px; line-height: 1; }
.cl3 { margin-left: -2px; }

.props { flex: 1; min-width: 0; display: flex; flex-direction: column; padding-left: 7px; }
.phead-r { padding-left: 4px; padding-right: 3px; }
.rtabs { height: 74px; flex: none; border-bottom: 2px solid #cacaca; }
.rtab { width: 68px; height: 72px; background: #c1d2ec; display: flex; flex-direction: column; align-items: center; padding-top: 9px; font-size: 13px; color: #222; line-height: 20px; }
.rtab-ic { width: 40px; height: 40px; flex: none; }
.pbody { flex: 1; margin-top: 3px; margin-left: 4px; background: #f3f2ee; padding: 10px 9px 0 11px; font-size: 12px; color: #111; }
.ghead { height: 18px; display: flex; align-items: center; }
.ghead i { flex: 1; height: 1px; background: #c3ced6; margin-left: 7px; }
.ghead span { color: #222; }
.g2 { margin-top: 8px; }
.prow { display: flex; align-items: center; justify-content: space-between; padding-left: 15px; }
.plbl { letter-spacing: .4px; margin-top: -4px; }
.r-type .plbl { margin-top: -2px; }
.r-type { margin-top: 4px; height: 24px; }
.r-c1 { margin-top: 10px; height: 22px; }
.r-c2 { margin-top: 2px; height: 22px; }
.r-m { margin-top: 7px; height: 22px; }
.r-m .plbl { margin-top: -5px; }
.psel { width: 120px; height: 23px; background: #fff; border: 1px solid #a9c0dc; display: flex; align-items: center; justify-content: space-between; padding-left: 8px; }
.psel b { display: flex; align-items: center; justify-content: center; width: 13px; height: 19px; margin-right: 1px; background: #b9cdf5; }
.chev2 { width: 9px; height: 5px; }
.swatch { position: relative; width: 22px; height: 22px; background: #fff; border: 1px solid #e8e8e8; border-right-color: #888; border-bottom-color: #888; box-shadow: inset 1px 1px 0 #999; }
.sw1 { background: #f2f4f7; }
.swatch::after { content: ""; position: absolute; right: 2px; bottom: 2px; border-left: 2.500px solid transparent; border-right: 2.500px solid transparent; border-top: 3px solid #222; }
.spin { display: flex; gap: 2px; }
.inp { width: 44px; height: 22px; background: #fff; border: 1px solid #9fb8d8; padding-left: 2px; font: 12px/20px "Liberation Sans", sans-serif; color: #222; }
.sbtn { width: 14px; height: 22px; background: #bcd0ee; display: flex; flex-direction: column; align-items: center; justify-content: space-around; padding: 2px 0; }
.sbtn em { display: block; width: 0; height: 0; border-left: 4px solid transparent; border-right: 4px solid transparent; }
.up { border-bottom: 5px solid #3f5a7c; }
.dn { border-top: 5px solid #3f5a7c; }
```
